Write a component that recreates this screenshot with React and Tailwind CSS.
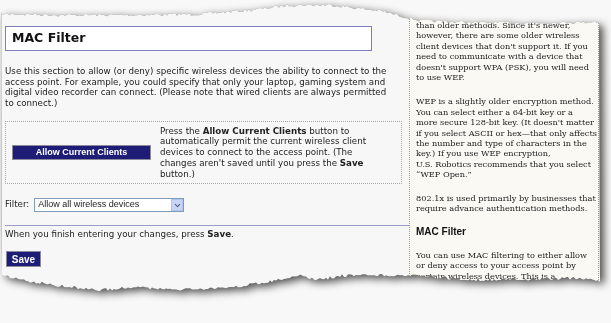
import { FiChevronDown } from "react-icons/fi"

// torn edge points: base line through key points plus small jitter
const lerp = (pts, x) => {
  for (let i = 0; i < pts.length - 1; i++) {
    const [x0, y0] = pts[i]
    const [x1, y1] = pts[i + 1]
    if (x >= x0 && x <= x1) return y0 + ((x - x0) / (x1 - x0)) * (y1 - y0)
  }
  return pts[pts.length - 1][1]
}

const makeRand = (seed) => {
  let s = seed
  return () => {
    s = (s * 16807) % 2147483647
    return (s - 1) / 2147483646
  }
}

const topPts = [[0, 14], [60, 15], [130, 15], [200, 14], [250, 10], [290, 5], [330, 5], [380, 11], [420, 21], [480, 23], [550, 23], [600, 22]]
const bottomPts = [[0, 275], [20, 280], [40, 283], [67, 287], [100, 290], [133, 287], [167, 290], [200, 289], [233, 287], [267, 282], [297, 275], [317, 280], [340, 276], [400, 275], [480, 280], [530, 279], [580, 278], [600, 281]]

const buildClip = () => {
  const rand = makeRand(7)
  const out = []
  for (let x = 0; x <= 599; x += 2) {
    out.push(`${x}px ${(lerp(topPts, x) + (rand() - 0.5) * 3).toFixed(1)}px`)
  }
  for (let x = 599; x >= 0; x -= 2) {
    out.push(`${x}px ${(lerp(bottomPts, x) + (rand() - 0.5) * 3).toFixed(1)}px`)
  }
  return `polygon(${out.join(",")})`
}

const clip = buildClip()

const sans = "font-['DejaVu_Sans',sans-serif]"
const arial = "font-['Liberation_Sans',Arial,sans-serif]"

export default function App() {
  return (
    <div className="w-[611px] h-[323px] bg-[#f8f8f8] overflow-hidden pl-px">
      <div className="w-[599px] [filter:drop-shadow(0_0_0.5px_rgba(0,0,0,0.45))_drop-shadow(4px_3px_4px_rgba(0,0,0,0.7))]">
        <div style={{ clipPath: clip }} className="h-[300px] flex bg-[#f7f7f7] border-l border-[#cdcdcd] text-[#222]">
          {/* main column */}
          <div className={`w-[407px] pl-[3px] pt-[26px] ${sans}`}>
            <div className="w-[367px] h-[25px] border border-[#7d7db8] bg-white flex items-center pl-[6px]">
              <h1 className="text-[12.5px] font-bold text-[#111]">MAC Filter</h1>
            </div>

            <p className="mt-[15px] w-[390px] text-[8.7px] leading-[10.5px]">
              Use this section to allow (or deny) specific wireless devices the ability to connect to the access point. For example, you could specify that only your laptop, gaming system and digital video recorder can connect. (Please note that wired clients are always permitted to connect.)
            </p>

            <div className="mt-[13px] w-[397px] h-[63px] border border-dotted border-[#a8a8a8] flex items-center">
              <button className={`ml-[6px] w-[139px] h-[15px] shrink-0 bg-[#1d1d78] border border-[#8a8a9a] text-white text-[9px] font-bold ${arial}`}>
                Allow Current Clients
              </button>
              <p className="ml-[9px] whitespace-nowrap text-[8.7px] leading-[10.7px]">
                Press the <b>Allow Current Clients</b> button to<br />
                automatically permit the current wireless client<br />
                devices to connect to the access point. (The<br />
                changes aren't saved until you press the <b>Save</b><br />
                button.)
              </p>
            </div>

            <div className="mt-[14px] flex items-center gap-[5px] text-[8.7px]">
              <span>Filter:</span>
              <div className="w-[150px] h-[14px] border border-[#7f9db9] bg-white flex items-center justify-between">
                <span className={`pl-[3px] text-[9px] ${arial}`}>Allow all wireless devices</span>
                <span className="w-[12px] h-[12px] bg-[#c8d6f5] border border-[#b0c4ec] flex items-center justify-center text-[#4d6185]">
                  <FiChevronDown size={9} strokeWidth={3} />
                </span>
              </div>
            </div>

            <div className="mt-[13px] h-px bg-[#9c9ccc]" />

            <p className="mt-[3px] text-[8.7px] leading-[10.5px]">
              When you finish entering your changes, press <b>Save</b>.
            </p>

            <button className={`mt-[11px] ml-px w-[35px] h-[16px] bg-[#1d1d78] border border-[#8a8a9a] text-white text-[10px] font-bold ${arial}`}>
              Save
            </button>
          </div>

          {/* help panel */}
          <div className="w-[190px] overflow-hidden bg-[#fbf9f4] border-x border-dotted border-[#9a9a9a] pt-[20px] pl-[6px] whitespace-nowrap text-[8.2px] leading-[10.4px] text-[#222] font-['DejaVu_Serif',Georgia,serif]">
            <p className="mb-[14px]">
              than older methods. Since it's newer,<br />
              however, there are some older wireless<br />
              client devices that don't support it. If you<br />
              need to communicate with a device that<br />
              doesn't support WPA (PSK), you will need<br />
              to use WEP.
            </p>
            <p className="mb-[13px]">
              WEP is a slightly older encryption method.<br />
              You can select either a 64-bit key or a<br />
              more secure 128-bit key. (It doesn't matter<br />
              if you select ASCII or hex—that only affects<br />
              the number and type of characters in the<br />
              key.) If you use WEP encryption,<br />
              U.S. Robotics recommends that you select<br />
              “WEP Open.”
            </p>
            <p className="mb-[13px]">
              802.1x is used primarily by businesses that<br />
              require advance authentication methods.
            </p>
            <h2 className={`mb-[13px] text-[10px] leading-[10.4px] font-bold text-[#111] ${arial}`}>MAC Filter</h2>
            <p>
              You can use MAC filtering to either allow<br />
              or deny access to your access point by<br />
              certain wireless devices. This is a
            </p>
          </div>
        </div>
      </div>
    </div>
  )
}
